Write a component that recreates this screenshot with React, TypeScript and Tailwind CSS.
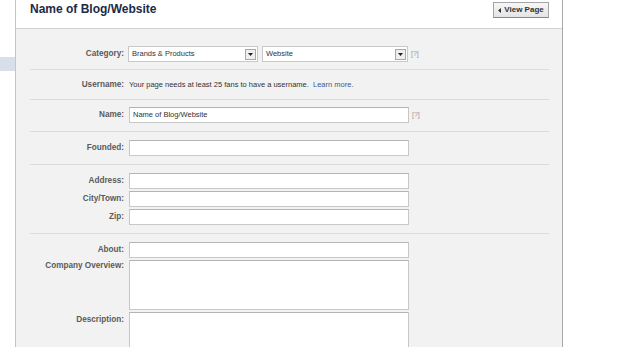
import React from 'react';

const labelClass = 'w-[108px] shrink-0 text-right text-[8.2px] font-bold leading-[10px] text-[#5a5a5a]';
const boxClass = 'ml-[5px] w-[280px] border border-[#c8c8c8] border-t-[#b4b4b4] bg-white';

const Separator = () => <div className="ml-[14px] mr-[13px] h-px bg-[#dcdcdc]" />;

const Hint = () => <span className="ml-[3px] text-[7px] text-[#999]">[?]</span>;

const ArrowButton = () => (
  <div className="flex h-[11px] w-[11px] items-center justify-center border border-[#a8a8a8] bg-[#efefef]">
    <svg width="5" height="3" viewBox="0 0 5 3">
      <path d="M0 0h5L2.5 3z" fill="#222" />
    </svg>
  </div>
);

interface SelectProps {
  value: string;
  className: string;
}

const Select: React.FC<SelectProps> = ({ value, className }) => (
  <div className={`flex h-[16px] items-center justify-between border border-[#c8c8c8] bg-white pl-[3px] pr-[1px] ${className}`}>
    <span className="text-[7.5px] text-[#333]">{value}</span>
    <ArrowButton />
  </div>
);

interface FieldProps {
  label: string;
  value?: string;
  hint?: boolean;
}

const Field: React.FC<FieldProps> = ({ label, value, hint }) => (
  <div className="flex h-[16px] items-center">
    <div className={labelClass}>{label}</div>
    <div className={`${boxClass} flex h-[16px] items-center pl-[3px] text-[7.5px] text-[#333]`}>{value}</div>
    {hint && <Hint />}
  </div>
);

interface AreaProps {
  label: string;
  height: string;
  labelPad: string;
}

const Area: React.FC<AreaProps> = ({ label, height, labelPad }) => (
  <div className="flex items-start">
    <div className={`${labelClass} ${labelPad}`}>{label}</div>
    <div className={`${boxClass} ${height}`} />
  </div>
);

export default function App() {
  return (
    <div className="flex h-[347px] overflow-hidden bg-white font-['Liberation_Sans',Arial,sans-serif]">
      {/* Left: sidebar sliver */}
      <div className="w-[15px] shrink-0 pt-[57px]">
        <div className="h-[14px] bg-[#d8dfea]" />
      </div>

      {/* Edit panel */}
      <div className="w-[548px] shrink-0 border-x border-x-[#c6c6c6] border-r-[#aaa] bg-[#f2f2f2]">
        <div className="flex h-[29px] items-start justify-between border-b border-[#d4d4d4] bg-white pl-[14px] pr-[13px]">
          <h1 className="pt-[2px] text-[12px] font-bold leading-[14px] text-[#1c2a47]">Name of Blog/Website</h1>
          <button className="mt-[2px] flex h-[16px] w-[56px] items-center justify-center gap-[3px] border border-[#a5a5a5] border-b-[#888] bg-gradient-to-b from-[#f7f7f7] to-[#e4e4e4] text-[8px] font-bold text-[#333]">
            <svg width="3" height="5" viewBox="0 0 3 5">
              <path d="M3 0v5L0 2.5z" fill="#333" />
            </svg>
            View Page
          </button>
        </div>

        <div className="pb-[7px] pt-[17px]">
          <div className="flex h-[16px] items-center">
            <div className={labelClass}>Category:</div>
            <div className="ml-[4px] flex w-[280px] gap-[4px]">
              <Select value="Brands & Products" className="w-[130px]" />
              <Select value="Website" className="w-[146px]" />
            </div>
            <Hint />
          </div>
        </div>
        <Separator />

        <div className="flex h-[29px] items-center">
          <div className={labelClass}>Username:</div>
          <div className="ml-[5px] text-[7.5px] text-[#333]">
            Your page needs at least 25 fans to have a username.&nbsp;&nbsp;
            <span className="text-[#3b5998]">Learn more.</span>
          </div>
        </div>
        <Separator />

        <div className="pb-[8px] pt-[7px]">
          <Field label="Name:" value="Name of Blog/Website" hint />
        </div>
        <Separator />

        <div className="py-[8px]">
          <Field label="Founded:" />
        </div>
        <Separator />

        <div className="flex flex-col gap-[2px] py-[8px]">
          <Field label="Address:" />
          <Field label="City/Town:" />
          <Field label="Zip:" />
        </div>
        <Separator />

        <div className="flex flex-col gap-[2px] pt-[8px]">
          <Field label="About:" />
          <Area label="Company Overview:" height="h-[50px]" labelPad="pt-[1px]" />
          <Area label="Description:" height="h-[50px]" labelPad="pt-[3px]" />
        </div>
      </div>
    </div>
  );
}
